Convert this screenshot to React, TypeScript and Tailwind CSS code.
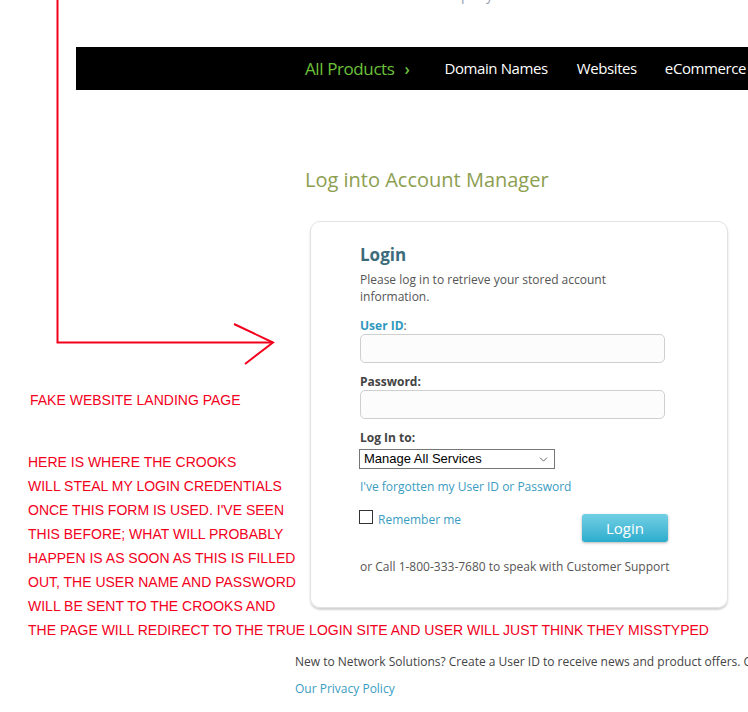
import { ChevronDown } from 'lucide-react';

const site = { fontFamily: '"Open Sans", "Noto Sans", sans-serif' };
const marker = { fontFamily: '"Liberation Sans", Arial, sans-serif' };

const redLines = [
    'HERE IS WHERE THE CROOKS',
    'WILL STEAL MY LOGIN CREDENTIALS',
    "ONCE THIS FORM IS USED. I'VE SEEN",
    'THIS BEFORE; WHAT WILL PROBABLY',
    'HAPPEN IS AS SOON AS THIS IS FILLED',
    'OUT, THE USER NAME AND PASSWORD',
    'WILL BE SENT TO THE CROOKS AND',
    'THE PAGE WILL REDIRECT TO THE TRUE LOGIN SITE AND USER WILL JUST THINK THEY MISSTYPED',
];

function Arrow() {
    return (
        <svg className="pointer-events-none absolute top-0 left-0" width="748" height="712">
            <path d="M57.5 0 V342.5 H273" fill="none" stroke="#f2001c" strokeWidth="2" />
            <path d="M234 324 L273 342.5 L245 364" fill="none" stroke="#f2001c" strokeWidth="2" />
        </svg>
    );
}

export default function App() {
    return (
        <div className="relative h-[712px] w-[748px] overflow-hidden bg-white" style={site}>
            {/* cut-off tagline above the menu */}
            <div className="absolute top-[-16px] left-[433px] text-[14px] text-gray-400">company</div>

            {/* Menu bar */}
            <div className="mt-[47px] ml-[76px] flex h-[43px] items-center bg-black pl-[229px] text-[15px] tracking-[-0.4px] whitespace-nowrap text-white">
                <span className="mr-[35px] flex items-center gap-[10px] text-[17px] text-[#6cc13a]">
                    All Products
                    <span className="text-[16px] font-semibold">›</span>
                </span>
                <span className="mr-[29px]">Domain Names</span>
                <span className="mr-[28px]">Websites</span>
                <span>eCommerce</span>
            </div>

            <h1 className="mt-[76px] ml-[305px] text-[20px] leading-[28px] text-[#8c9e4f]">
                Log into Account Manager
            </h1>

            {/* Login card */}
            <div className="mt-[27px] ml-[310px] h-[387px] w-[418px] rounded-[10px] border border-[#e2e2e2] pt-[21px] pl-[49px] shadow-[0_2px_2px_rgba(0,0,0,0.18)]">
                <h2 className="text-[17px] leading-[24px] font-bold text-[#3c6b7b]">Login</h2>
                <p className="mt-1 w-[260px] text-[12px] leading-[17px] text-[#555]">
                    Please log in to retrieve your stored account information.
                </p>

                <label className="mt-3 block text-[12px] leading-[17px] text-[#555]">
                    <span className="font-bold text-[#2f97bd]">User ID</span>:
                </label>
                <div className="h-[29px] w-[305px] rounded-[5px] border border-[#cfcfcf] bg-[#fcfcfc]" />

                <label className="mt-[10px] block text-[12px] leading-[17px] font-bold text-[#444]">Password:</label>
                <div className="h-[29px] w-[305px] rounded-[5px] border border-[#cfcfcf] bg-[#fcfcfc]" />

                <label className="mt-[10px] block text-[12px] leading-[17px] font-bold text-[#444]">Log In to:</label>
                <div
                    className="mt-[3px] -ml-px flex h-[20px] w-[196px] items-center justify-between border border-[#767676] pr-1 pl-1 text-[13px] text-black"
                    style={marker}
                >
                    Manage All Services
                    <ChevronDown size={13} strokeWidth={1.5} className="text-[#444]" />
                </div>

                <div className="mt-[9px] text-[12px] leading-[17px] text-[#3a9cbf]">
                    I've forgotten my User ID or Password
                </div>

                <div className="mt-[14px] flex w-[308px] items-start justify-between">
                    <div className="-ml-px flex items-start gap-[5px]">
                        <div className="mt-px h-[14px] w-[14px] border border-[#333] bg-white" />
                        <span className="mt-[2px] text-[12px] leading-[17px] text-[#3a9cbf]">Remember me</span>
                    </div>
                    <button className="mt-[5px] h-[28px] w-[86px] rounded-[3px] bg-gradient-to-b from-[#70cfe4] to-[#2aadce] text-[15px] text-white shadow-[0_1px_3px_rgba(0,0,0,0.3)]">
                        Login
                    </button>
                </div>

                <p className="mt-[16px] text-[12px] leading-[17px] text-[#555]">
                    or Call 1-800-333-7680 to speak with Customer Support
                </p>
            </div>

            <p className="mt-[45px] ml-[295px] text-[12px] leading-[18px] whitespace-nowrap text-[#444]">
                New to Network Solutions? Create a User ID to receive news and product offers. Create one now.
            </p>
            <p className="mt-[9px] ml-[295px] text-[12px] leading-[18px] text-[#3a9cbf]">Our Privacy Policy</p>

            {/* Red annotations */}
            <Arrow />
            <div className="absolute top-[391px] left-[30px] text-[14px] leading-[18px] text-[#f2001c]" style={marker}>
                FAKE WEBSITE LANDING PAGE
            </div>
            <div className="absolute top-[450px] left-[28px] text-[14px] leading-[24px] whitespace-nowrap text-[#f2001c]" style={marker}>
                {redLines.map((line) => (
                    <div key={line}>{line}</div>
                ))}
            </div>
        </div>
    );
}
